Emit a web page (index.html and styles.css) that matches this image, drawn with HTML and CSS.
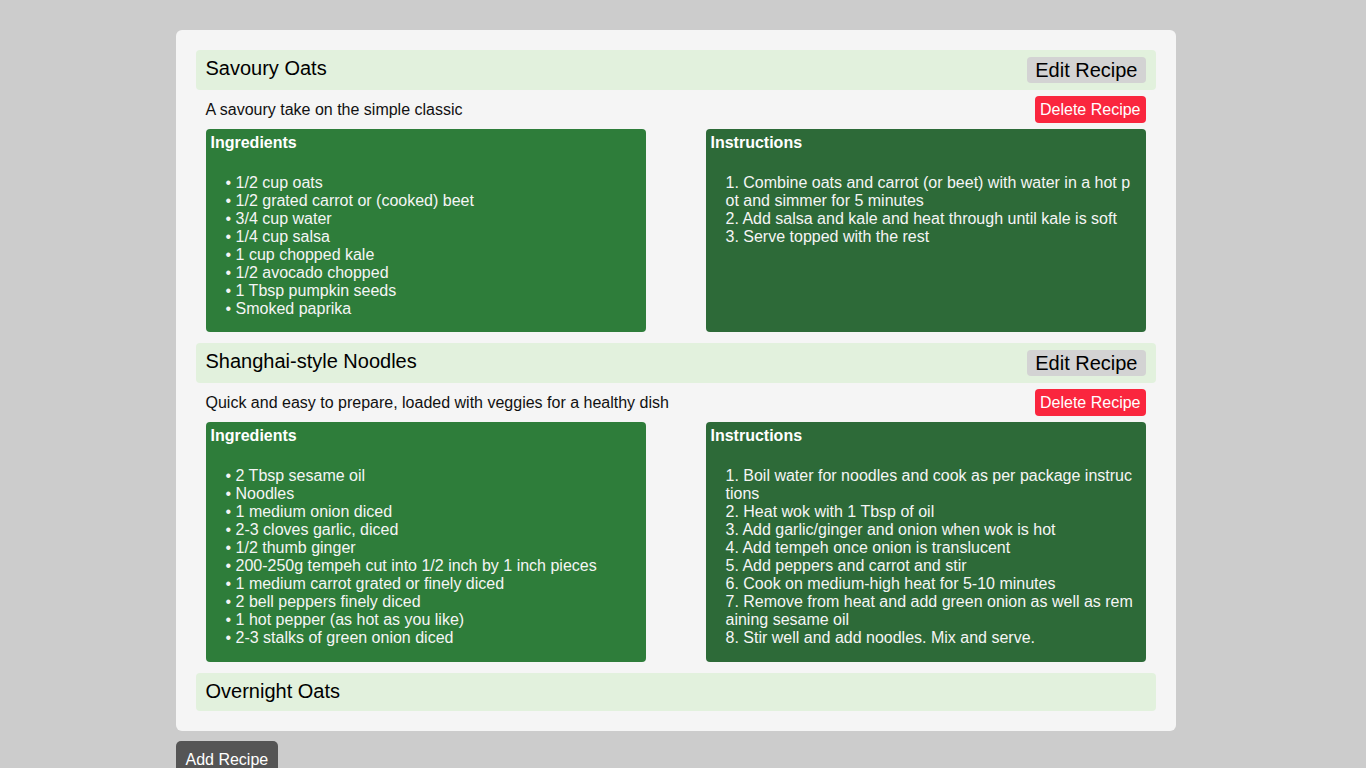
FILE: index.html
```html
<!DOCTYPE html>
<html lang="en">
<head>
<meta charset="utf-8">
<title>Recipe Box</title>
<link rel="stylesheet" href="styles.css">
</head>
<body>
<div class="page">
  <div class="recipe-box">
    <div class="recipe">
      <div class="recipe-header">
        <h2 class="recipe-title">Savoury Oats</h2>
        <button class="btn-edit">Edit Recipe</button>
      </div>
      <div class="recipe-desc-row">
        <p class="recipe-desc">A savoury take on the simple classic</p>
        <button class="btn-delete">Delete Recipe</button>
      </div>
      <div class="recipe-body">
        <div class="panel panel-ingredients">
          <h4 class="panel-title">Ingredients</h4>
          <ul class="panel-list">
            <li>1/2 cup oats</li>
            <li>1/2 grated carrot or (cooked) beet</li>
            <li>3/4 cup water</li>
            <li>1/4 cup salsa</li>
            <li>1 cup chopped kale</li>
            <li>1/2 avocado chopped</li>
            <li>1 Tbsp pumpkin seeds</li>
            <li>Smoked paprika</li>
          </ul>
        </div>
        <div class="panel panel-instructions">
          <h4 class="panel-title">Instructions</h4>
          <ol class="panel-list steps">
            <li>1. Combine oats and carrot (or beet) with water in a hot pot and simmer for 5 minutes</li>
            <li>2. Add salsa and kale and heat through until kale is soft</li>
            <li>3. Serve topped with the rest</li>
          </ol>
        </div>
      </div>
    </div>

    <div class="recipe">
      <div class="recipe-header">
        <h2 class="recipe-title">Shanghai-style Noodles</h2>
        <button class="btn-edit">Edit Recipe</button>
      </div>
      <div class="recipe-desc-row">
        <p class="recipe-desc">Quick and easy to prepare, loaded with veggies for a healthy dish</p>
        <button class="btn-delete">Delete Recipe</button>
      </div>
      <div class="recipe-body">
        <div class="panel panel-ingredients">
          <h4 class="panel-title">Ingredients</h4>
          <ul class="panel-list">
            <li>2 Tbsp sesame oil</li>
            <li>Noodles</li>
            <li>1 medium onion diced</li>
            <li>2-3 cloves garlic, diced</li>
            <li>1/2 thumb ginger</li>
            <li>200-250g tempeh cut into 1/2 inch by 1 inch pieces</li>
            <li>1 medium carrot grated or finely diced</li>
            <li>2 bell peppers finely diced</li>
            <li>1 hot pepper (as hot as you like)</li>
            <li>2-3 stalks of green onion diced</li>
          </ul>
        </div>
        <div class="panel panel-instructions">
          <h4 class="panel-title">Instructions</h4>
          <ol class="panel-list steps">
            <li>1. Boil water for noodles and cook as per package instructions</li>
            <li>2. Heat wok with 1 Tbsp of oil</li>
            <li>3. Add garlic/ginger and onion when wok is hot</li>
            <li>4. Add tempeh once onion is translucent</li>
            <li>5. Add peppers and carrot and stir</li>
            <li>6. Cook on medium-high heat for 5-10 minutes</li>
            <li>7. Remove from heat and add green onion as well as remaining sesame oil</li>
            <li>8. Stir well and add noodles. Mix and serve.</li>
          </ol>
        </div>
      </div>
    </div>

    <div class="recipe recipe-collapsed">
      <div class="recipe-header">
        <h2 class="recipe-title">Overnight Oats</h2>
      </div>
    </div>
  </div>
  <div class="actions">
    <button class="btn-add">Add Recipe</button>
  </div>
</div>
</body>
</html>
```

FILE: styles.css
```css
html, body {
  margin: 0;
  padding: 0;
}

body {
  background: #cccccc;
  font-family: "Liberation Sans", Arial, sans-serif;
  font-size: 16px;
  color: #111;
  padding-right: 15px;
}

.page {
  width: 1000px;
  margin: 0 auto;
  padding: 30px 0 390px;
}

.recipe-box {
  background: #f5f5f5;
  border-radius: 6px;
  padding: 20px;
  display: flex;
  flex-direction: column;
  gap: 11px;
}

.recipe {
  display: flex;
  flex-direction: column;
}

.recipe-header {
  background: #e2f1dd;
  border-radius: 4px;
  padding: 7px 10px;
  display: flex;
  justify-content: space-between;
  align-items: flex-start;
}

.recipe-collapsed .recipe-header {
  padding: 7px 10px 8px;
}

.recipe-title {
  margin: 0;
  font-size: 20px;
  font-weight: normal;
  line-height: 23px;
  color: #000;
}

.btn-edit {
  font-family: inherit;
  font-size: 20px;
  line-height: 24px;
  padding: 1px 8px;
  border: none;
  border-radius: 4px;
  background: #d3d3d3;
  color: #000;
}

.recipe-desc-row {
  display: flex;
  justify-content: space-between;
  align-items: center;
  padding: 6px 10px;
}

.recipe-desc {
  margin: 0;
  line-height: 18px;
  color: #111;
}

.btn-delete {
  font-family: inherit;
  font-size: 16px;
  line-height: 19px;
  padding: 4px 5px;
  border: none;
  border-radius: 4px;
  background: #fa263e;
  color: #fff;
}

.recipe-body {
  display: grid;
  grid-template-columns: 1fr 1fr;
  column-gap: 60px;
  padding: 0 10px;
}

.panel {
  border-radius: 4px;
  padding: 5px;
  color: #f5f5f5;
}

.panel-ingredients {
  background: #2e7d3a;
}

.panel-instructions {
  background: #2d6a38;
}

.panel-title {
  margin: 0;
  font-size: 16px;
  line-height: 18px;
  font-weight: bold;
  color: #fff;
}

.panel-list {
  list-style: none;
  margin: 22px 0 9px;
  padding: 0 6px 0 15px;
  line-height: 18px;
}

.recipe + .recipe .panel-list {
  margin-bottom: 10px;
}

.panel-ingredients .panel-list li::before {
  content: "\2022\00a0";
}

.steps li {
  word-break: break-all;
}

.actions {
  margin-top: 10px;
}

.btn-add {
  font-family: inherit;
  font-size: 16px;
  line-height: 18px;
  padding: 10px 10px;
  border: none;
  border-radius: 5px;
  background: #555;
  color: #fff;
}
```
